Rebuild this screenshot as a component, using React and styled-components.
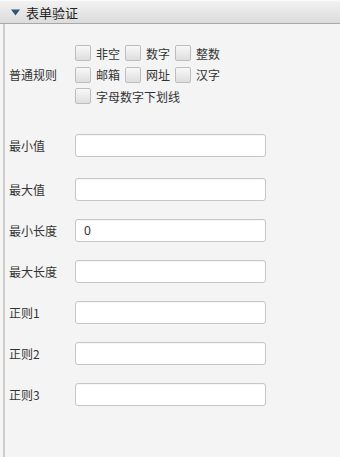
import React from 'react'
import styled, { createGlobalStyle } from 'styled-components'

const GlobalStyle = createGlobalStyle`
  html, body {
    margin: 0;
    padding: 0;
    background: #f4f4f4;
  }
  body {
    font-family: 'Noto Sans CJK SC', 'Microsoft YaHei', sans-serif;
    font-size: 12px;
    color: #333;
  }
`

const Panel = styled.div`
  width: 340px;
  height: 457px;
  display: flex;
  flex-direction: column;
  background: #f4f4f4;
  overflow: hidden;
`

const Header = styled.div`
  height: 22px;
  display: flex;
  align-items: center;
  gap: 6px;
  padding-left: 11px;
  border-top: 1px solid #fafafa;
  border-bottom: 1px solid #a8a8a8;
  background: linear-gradient(#f2f2f2, #dcdcdc);
  font-size: 13px;
  color: #222;
`

const Body = styled.div`
  flex: 1;
  margin-left: 3px;
  border-left: 2px solid #cdcdcd;
  padding: 21px 0 0 4px;
`

const RuleRow = styled.div`
  display: flex;
  align-items: center;
`

const Label = styled.div`
  width: 66px;
  flex-shrink: 0;
  white-space: nowrap;
  color: #333;
`

const CheckGrid = styled.div`
  display: grid;
  grid-template-columns: repeat(3, 50px);
  grid-auto-rows: 16px;
  row-gap: 5.5px;
`

const CheckItem = styled.label`
  display: flex;
  align-items: center;
  gap: 5px;
  white-space: nowrap;
  grid-column: ${(p) => (p.wide ? '1 / -1' : 'auto')};
`

const Box = styled.span`
  width: 14px;
  height: 14px;
  border: 1px solid #bdbdbd;
  border-radius: 2px;
  background: linear-gradient(#f8f8f8, #dedede);
  flex-shrink: 0;
`

const FormList = styled.div`
  margin-top: 30px;
  display: flex;
  flex-direction: column;
  gap: 18px;
`

const FieldRow = styled.div`
  display: flex;
  align-items: center;
  margin-bottom: ${(p) => (p.extra ? '3px' : '0')};
`

const Input = styled.input`
  box-sizing: border-box;
  width: 191px;
  height: 23px;
  margin: 0;
  padding: 0 8px;
  border: 1px solid #c6c6c6;
  border-radius: 3px;
  background: #fff;
  box-shadow: inset 0 1px 1px rgba(0, 0, 0, 0.04);
  font-family: 'Noto Sans', 'Noto Sans CJK SC', sans-serif;
  font-size: 12px;
  color: #333;
  outline: none;
`

const rules = ['非空', '数字', '整数', '邮箱', '网址', '汉字']

const fields = [
  { label: '最小值', value: '' },
  { label: '最大值', value: '' },
  { label: '最小长度', value: '0' },
  { label: '最大长度', value: '' },
  { label: '正则1', value: '' },
  { label: '正则2', value: '' },
  { label: '正则3', value: '' },
]

const App = () => {
  return (
    <>
      <GlobalStyle />
      <Panel>
        <Header>
          <svg width='9' height='7' viewBox='0 0 9 7'>
            <path d='M0 0.5 L9 0.5 L4.5 6.5 Z' fill='#2b5878' />
          </svg>
          表单验证
        </Header>
        <Body>
          <RuleRow>
            <Label>普通规则</Label>
            <CheckGrid>
              {rules.map((r) => (
                <CheckItem key={r}>
                  <Box />
                  {r}
                </CheckItem>
              ))}
              <CheckItem wide>
                <Box />
                字母数字下划线
              </CheckItem>
            </CheckGrid>
          </RuleRow>
          <FormList>
            {fields.map((f, i) => (
              <FieldRow key={f.label} extra={i === 0}>
                <Label>{f.label}</Label>
                <Input defaultValue={f.value} />
              </FieldRow>
            ))}
          </FormList>
        </Body>
      </Panel>
    </>
  )
}

export default App
